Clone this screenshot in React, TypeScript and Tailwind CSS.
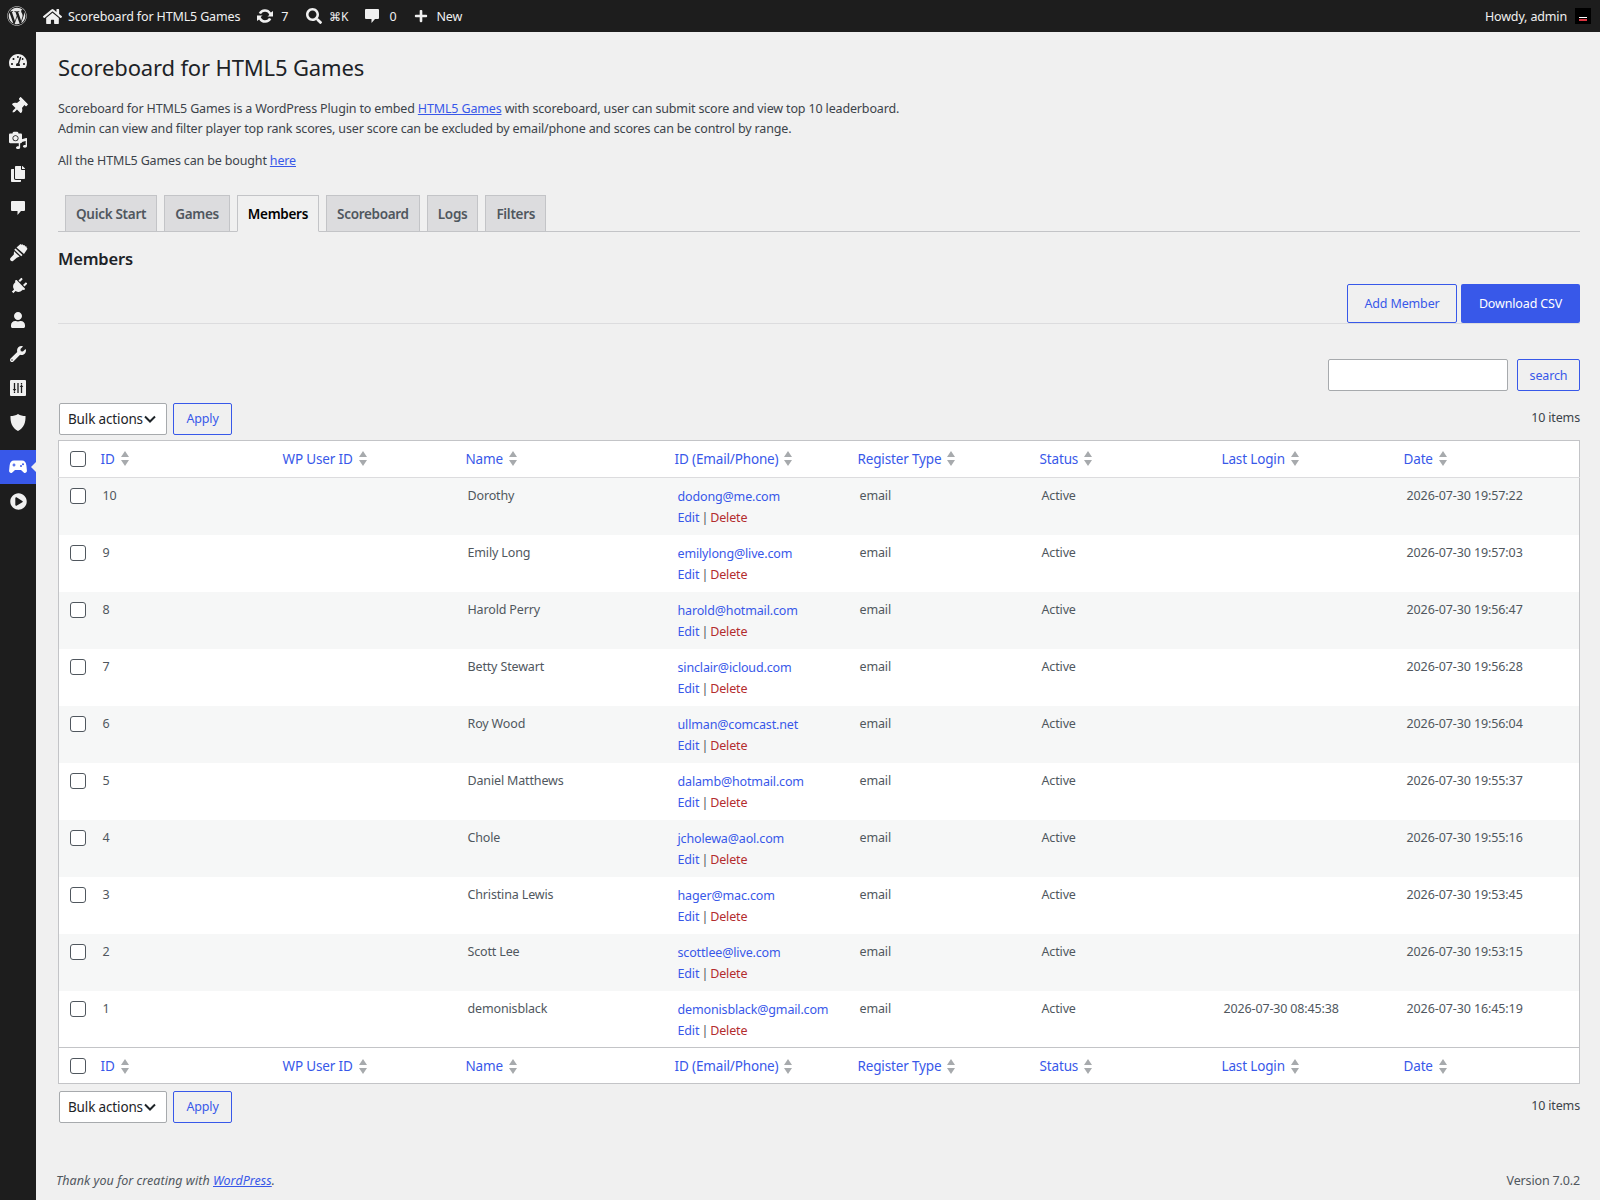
import type { ReactNode } from 'react';
import {
  FaWordpress, FaHome, FaSearch, FaPlus, FaTachometerAlt, FaThumbtack, FaCopy,
  FaPlug, FaUser, FaWrench, FaPlayCircle, FaCamera, FaMusic,
} from 'react-icons/fa';

const members = [
  { id: 10, name: 'Dorothy', email: 'dodong@me.com', date: '2026-07-30 19:57:22' },
  { id: 9, name: 'Emily Long', email: 'emilylong@live.com', date: '2026-07-30 19:57:03' },
  { id: 8, name: 'Harold Perry', email: 'harold@hotmail.com', date: '2026-07-30 19:56:47' },
  { id: 7, name: 'Betty Stewart', email: 'sinclair@icloud.com', date: '2026-07-30 19:56:28' },
  { id: 6, name: 'Roy Wood', email: 'ullman@comcast.net', date: '2026-07-30 19:56:04' },
  { id: 5, name: 'Daniel Matthews', email: 'dalamb@hotmail.com', date: '2026-07-30 19:55:37' },
  { id: 4, name: 'Chole', email: 'jcholewa@aol.com', date: '2026-07-30 19:55:16' },
  { id: 3, name: 'Christina Lewis', email: 'hager@mac.com', date: '2026-07-30 19:53:45' },
  { id: 2, name: 'Scott Lee', email: 'scottlee@live.com', date: '2026-07-30 19:53:15' },
  { id: 1, name: 'demonisblack', email: 'demonisblack@gmail.com', date: '2026-07-30 16:45:19', login: '2026-07-30 08:45:38' },
];

const headers = ['ID', 'WP User ID', 'Name', 'ID (Email/Phone)', 'Register Type', 'Status', 'Last Login', 'Date'];
const tabs = ['Quick Start', 'Games', 'Members', 'Scoreboard', 'Logs', 'Filters'];

function SideItem({ children, active }: { children: ReactNode; active?: boolean }) {
  return (
    <div className={`relative flex h-[34px] w-9 items-center justify-center text-[#f0f0f0] ${active ? 'bg-[#3858e9] text-white' : ''}`}>
      {children}
      {active && <span className="absolute right-0 top-[12px] h-0 w-0 border-y-[5px] border-r-[5px] border-y-transparent border-r-[#f0f0f0]" />}
    </div>
  );
}

// speech bubble with the tail at the lower middle
function CommentIcon({ size }: { size: number }) {
  return (
    <svg width={size} height={size} viewBox="0 0 16 16" fill="currentColor">
      <path d="M2 1h12a1 1 0 0 1 1 1v8a1 1 0 0 1-1 1h-3l-3.5 4V11H2a1 1 0 0 1-1-1V2a1 1 0 0 1 1-1z" />
    </svg>
  );
}

function SyncIcon() {
  return (
    <svg width="18" height="16" viewBox="0 0 18 16" fill="currentColor">
      <path d="M9 1.2a6.8 6.8 0 0 1 5.900 3.400L17 3v5.600h-5.600l1.900-1.700A4.700 4.700 0 0 0 9 3.800a4.800 4.800 0 0 0-4 2.200L2.700 5A6.800 6.800 0 0 1 9 1.200z" />
      <path d="M9 14.800a6.800 6.800 0 0 1-5.900-3.400L1 13V7.400h5.600L4.700 9.100A4.700 4.700 0 0 0 9 12.200a4.800 4.800 0 0 0 4-2.200l2.300 1A6.800 6.800 0 0 1 9 14.800z" />
    </svg>
  );
}

function BrushIcon() {
  return (
    <svg width="19" height="19" viewBox="0 0 19 19" fill="currentColor">
      <path d="M7.500 4.500L11.500 1l1 .8 1-.5.800 1 1.200-.2.500 1.200 1.500.2.300 1.500.700.800-3.500 5.200z" />
      <path d="M6.500 5.500l7 6.500-1.200 1.300-7-6.500z" />
      <path d="M5 8.200l5.600 5.300-2.800 1.200-3.800 3.300c-.8.500-2 .2-2.600-.7-.5-.7-.4-1.700.1-2.200l3.300-3.500z" />
    </svg>
  );
}

function ShieldIcon() {
  return (
    <svg width="16" height="17" viewBox="0 0 16 17" fill="currentColor">
      <path d="M8 0c2.200 1.400 4.800 2 7.500 2 .3 6.200-1.500 12-7.500 15C2 14 .2 8.200.5 2 3.200 2 5.800 1.400 8 0z" />
    </svg>
  );
}

function SettingsIcon() {
  return (
    <svg width="16" height="16" viewBox="0 0 16 16">
      <rect width="16" height="16" rx="1" fill="#f0f0f0" />
      <path d="M4.500 3v6M8 3v10M11.500 7v6M4.500 11.500V13M11.500 3v1.500" stroke="#1d1d1d" strokeWidth="1.300" fill="none" />
      <path d="M2.700 9h3.600l-1.800 2.500zM9.700 7h3.600l-1.800-2.500z" fill="#1d1d1d" />
    </svg>
  );
}

function GamepadIcon() {
  return (
    <svg width="18" height="14" viewBox="0 0 18 14">
      <path d="M5 .5h8c2.500 0 4 1.800 4.400 5l.5 5c.2 2-1.800 3.200-3.200 1.900L12 10H6l-2.700 2.400C1.900 13.700-.1 12.500.1 10.500l.5-5C1 2.300 2.500.5 5 .5z" fill="#fff" />
      <path d="M5 3.500v3M3.500 5h3" stroke="#3858e9" strokeWidth="1.200" fill="none" />
      <circle cx="12" cy="6" r="1" fill="#3858e9" />
      <circle cx="14" cy="4.200" r="1" fill="#3858e9" />
    </svg>
  );
}

function AdminBar() {
  return (
    <div className="flex h-8 items-center bg-[#1d1d1d] text-[#f0f0f0]">
      <FaWordpress className="ml-[7px] text-[20px] text-[#e6e6e6]" />
      <FaHome className="ml-[16px] text-[19px]" />
      <span className="ml-[6px] pt-[2px]">Scoreboard for HTML5 Games</span>
      <span className="ml-[16px]"><SyncIcon /></span>
      <span className="ml-[7px] pt-[2px]">7</span>
      <FaSearch className="ml-[18px] text-[16px]" />
      <span className="ml-[7px] pt-[2px] text-[12px]">⌘K</span>
      <span className="ml-[16px]"><CommentIcon size={16} /></span>
      <span className="ml-[9px] pt-[2px]">0</span>
      <FaPlus className="ml-[18px] text-[14px]" />
      <span className="ml-[8px] pt-[2px]">New</span>
      <span className="ml-auto pt-[2px]">Howdy, admin</span>
      <span className="ml-2 mr-[9px] flex h-4 w-4 flex-col items-center justify-end gap-px bg-black pb-[3px]">
        <span className="h-px w-2 bg-white" />
        <span className="h-[2px] w-2 bg-[#d9333f]" />
      </span>
    </div>
  );
}

function Sidebar() {
  return (
    <div className="w-9 shrink-0 bg-[#1d1d1d] pt-3">
      <SideItem><FaTachometerAlt className="text-[18px]" /></SideItem>
      <div className="mt-[11px]">
        <SideItem><FaThumbtack className="rotate-45 text-[17px]" /></SideItem>
        <SideItem>
          <span className="relative block h-[18px] w-[18px]">
            <FaCamera className="absolute left-0 top-0 text-[13px]" />
            <FaMusic className="absolute bottom-0 right-0 text-[11px]" />
          </span>
        </SideItem>
        <SideItem><FaCopy className="text-[16px]" /></SideItem>
        <SideItem><CommentIcon size={16} /></SideItem>
      </div>
      <div className="mt-[10px]">
        <SideItem><BrushIcon /></SideItem>
        <SideItem><FaPlug className="rotate-45 text-[17px]" /></SideItem>
        <SideItem><FaUser className="text-[16px]" /></SideItem>
        <SideItem><FaWrench className="text-[16px]" /></SideItem>
        <SideItem><SettingsIcon /></SideItem>
        <SideItem><ShieldIcon /></SideItem>
      </div>
      <div className="mt-[11px]">
        <SideItem active><GamepadIcon /></SideItem>
        <SideItem><FaPlayCircle className="text-[17px]" /></SideItem>
      </div>
    </div>
  );
}

function Check() {
  return <span className="block h-4 w-4 rounded-[3px] border border-[#50575e] bg-white" />;
}

function SortArrows() {
  return (
    <svg width="8" height="15" viewBox="0 0 8 15" className="ml-[6px]" fill="#a7aaad">
      <path d="M4 0l4 6H0zM4 15L0 9h8z" />
    </svg>
  );
}

function HeadRow({ bottom }: { bottom?: boolean }) {
  return (
    <tr className={`${bottom ? 'h-[36px] border-t border-[#c3c4c7]' : 'h-[37px] border-b border-[#dcdcde]'}`}>
      <td className="pl-[11px]"><Check /></td>
      {headers.map((h) => (
        <td key={h} className={`pl-2 ${bottom ? 'pt-[2px]' : ''}`}>
          <a className="inline-flex items-center text-[13.500px] text-[#3858e9]">{h}<SortArrows /></a>
        </td>
      ))}
    </tr>
  );
}

function Bulk() {
  return (
    <div className="flex gap-[6px] pl-px">
      <div className="flex h-8 w-[108px] items-center justify-between whitespace-nowrap rounded-[2px] border border-[#a7aaad] bg-white pl-2 pr-[10px] text-[13.500px] text-[#1d2327]">
        Bulk actions
        <svg width="12" height="8" viewBox="0 0 12 8" fill="none" stroke="#1d2327" strokeWidth="2"><path d="M1 1.500l5 5 5-5" /></svg>
      </div>
      <button className="h-8 w-[59px] rounded-[2px] border border-[#3858e9] pt-px text-[#3858e9]">Apply</button>
    </div>
  );
}

export default function App() {
  return (
    <div className="flex min-h-[1200px] flex-col bg-[#f0f0f0] font-['Noto_Sans','Open_Sans',sans-serif] text-[12.500px] tracking-[-0.15px] text-[#3c434a]">
      <AdminBar />
      <div className="flex flex-1">
        <Sidebar />
        <main className="flex min-w-0 flex-1 flex-col pl-[22px] pr-5">
          <h1 className="mt-[18px] text-[22px] leading-[34px] text-[#1d2327]">Scoreboard for HTML5 Games</h1>
          <p className="mt-[15px] leading-[20px]">
            Scoreboard for HTML5 Games is a WordPress Plugin to embed <a className="text-[#3858e9] underline">HTML5 Games</a> with scoreboard, user can submit score and view top 10 leaderboard.
            <br />
            Admin can view and filter player top rank scores, user score can be excluded by email/phone and scores can be control by range.
          </p>
          <p className="mt-[12px] leading-[20px]">All the HTML5 Games can be bought <a className="text-[#3858e9] underline">here</a></p>

          <div className="mt-[24px] flex h-[37px] items-end gap-[7px] border-b border-[#c3c4c7] pl-[7px]">
            {tabs.map((t) => (
              <div
                key={t}
                className={`-mb-px flex h-[37px] items-center border border-[#c3c4c7] px-[10px] pt-[2px] text-[13.500px] font-semibold tracking-[-0.3px] ${t === 'Members' ? 'border-b-[#f0f0f0] bg-[#f0f0f0] text-black' : 'bg-[#dcdcde] text-[#50575e]'}`}
              >
                {t}
              </div>
            ))}
          </div>

          <h2 className="mt-[15px] text-[16.500px] font-semibold leading-[24px] text-[#1d2327]">Members</h2>

          <div className="mt-[13px] flex justify-end gap-1 border-b border-[#dcdcde]">
            <button className="h-[39px] w-[110px] rounded-[2px] border border-[#3858e9] pt-[2px] text-[#3858e9]">Add Member</button>
            <button className="h-[39px] w-[119px] rounded-[2px] bg-[#3858e9] pt-[2px] text-white">Download CSV</button>
          </div>

          <div className="mt-[35px] flex justify-end">
            <div className="h-8 w-[180px] rounded-[2px] border border-[#a7aaad] bg-white" />
            <button className="ml-[9px] h-8 w-[63px] rounded-[2px] border border-[#3858e9] pt-[2px] text-[#3858e9]">search</button>
          </div>

          <div className="mt-[12px] flex items-start justify-between">
            <Bulk />
            <span className="mt-[6px]">10 items</span>
          </div>

          <table className="mt-[5px] w-full table-fixed border border-[#c3c4c7] bg-white">
            <colgroup>
              <col className="w-[34px]" />
              <col className="w-[182px]" />
              <col className="w-[183px]" />
              <col className="w-[209px]" />
              <col className="w-[183px]" />
              <col className="w-[182px]" />
              <col className="w-[182px]" />
              <col className="w-[182px]" />
              <col />
            </colgroup>
            <thead><HeadRow /></thead>
            <tbody className="text-[#50575e]">
              {members.map((m, i) => (
                <tr key={m.id} className={`h-[57px] align-top ${i % 2 === 0 ? 'bg-[#f6f7f7]' : 'bg-white'}`}>
                  <td className="pl-[11px] pt-[10px]"><Check /></td>
                  <td className="pl-[10px] pt-[8px] leading-[20px]">{m.id}</td>
                  <td />
                  <td className="pl-[10px] pt-[8px] leading-[20px]">{m.name}</td>
                  <td className="pl-[11px] pt-[8px] leading-[21px]">
                    <a className="text-[#3858e9]">{m.email}</a>
                    <div className="[word-spacing:-1px]">
                      <a className="text-[#3858e9]">Edit</a> | <a className="text-[#b32d2e]">Delete</a>
                    </div>
                  </td>
                  <td className="pl-[10px] pt-[8px] leading-[20px]">email</td>
                  <td className="pl-[10px] pt-[8px] leading-[20px]">Active</td>
                  <td className="pl-[10px] pt-[8px] leading-[20px]">{m.login}</td>
                  <td className="pl-[11px] pt-[8px] leading-[20px] tracking-[-0.1px]">{m.date}</td>
                </tr>
              ))}
            </tbody>
            <tfoot><HeadRow bottom /></tfoot>
          </table>

          <div className="mt-[7px] flex items-start justify-between">
            <Bulk />
            <span className="mt-[6px]">10 items</span>
          </div>

          <footer className="mt-auto flex justify-between pb-[9px] leading-[20px] text-[#50575e]">
            <span className="-ml-[2px] italic tracking-[0.05px]">Thank you for creating with <a className="text-[#3858e9] underline">WordPress</a>.</span>
            <span>Version 7.0.2</span>
          </footer>
        </main>
      </div>
    </div>
  );
}
